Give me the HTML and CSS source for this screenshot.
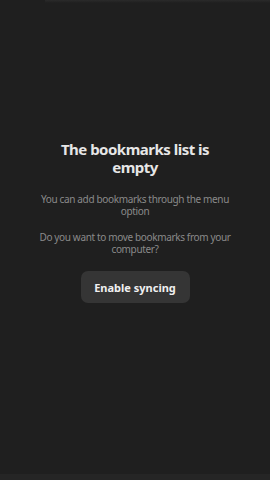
FILE: index.html
```html
<!DOCTYPE html>
<html>
<head>
<meta charset="utf-8">
<link rel="stylesheet" href="styles.css">
</head>
<body>
<div class="screen">
  <div class="top-shadow"></div>
  <main class="empty">
    <h1 class="title">The bookmarks list is empty</h1>
    <p class="text">You can add bookmarks through the menu option</p>
    <p class="text">Do you want to move bookmarks from your computer?</p>
    <button class="btn">Enable syncing</button>
  </main>
  <div class="bottom-line"></div>
</div>
</body>
</html>
```
FILE: styles.css
```css
html, body {
  margin: 0;
  padding: 0;
  background: #1f1f1f;
}
.screen {
  width: 270px;
  height: 480px;
  display: flex;
  flex-direction: column;
  position: relative;
  font-family: "Noto Sans", "Open Sans", sans-serif;
}
.top-shadow {
  position: absolute;
  top: 0;
  left: 45px;
  right: 0;
  height: 3px;
  background: linear-gradient(#2a2a2a, #1f1f1f);
}
.empty {
  flex: 1;
  display: flex;
  flex-direction: column;
  align-items: center;
  padding: 140px 0 0;
}
.title {
  margin: 0;
  font-size: 15px;
  line-height: 18px;
  font-weight: 700;
  color: #e6e6e6;
  text-align: center;
  width: 170px;
  letter-spacing: -0.5px;
}
.text {
  margin: 17px 0 0;
  width: 200px;
  font-size: 10px;
  line-height: 12px;
  color: #8a8a8a;
  text-align: center;
  letter-spacing: -0.35px;
}
.text + .text {
  margin-top: 14px;
}
.btn {
  margin-top: 16px;
  width: 109px;
  height: 32px;
  border: none;
  border-radius: 7px;
  background: #353535;
  color: #f0f0f0;
  font-family: inherit;
  font-size: 11px;
  font-weight: 700;
  padding: 0;
}
.bottom-line {
  height: 6px;
  background: #252525;
}
```
